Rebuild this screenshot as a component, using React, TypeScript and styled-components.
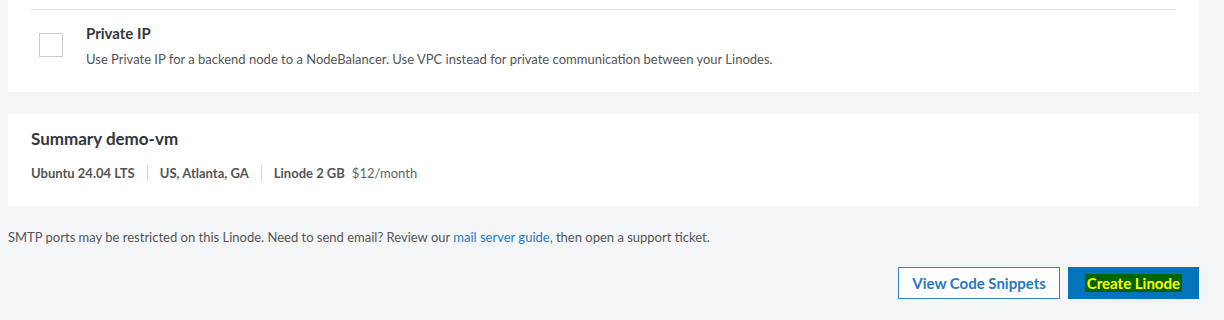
import styled, { createGlobalStyle } from "styled-components";

const GlobalStyle = createGlobalStyle`
  html, body {
    margin: 0;
    padding: 0;
    background: #f4f5f6;
  }
  body {
    font-family: Lato, "Noto Sans", sans-serif;
    color: #32363c;
  }
`;

const Page = styled.div`
  width: 1224px;
  height: 320px;
  overflow: hidden;
  padding: 0 25px 0 8px;
  box-sizing: border-box;
`;

const Card = styled.section<{ $pad: string }>`
  background: #fff;
  padding: ${(p) => p.$pad};
`;

const Divider = styled.hr`
  border: none;
  border-top: 1px solid #e3e5e8;
  margin: 0 0 13px;
`;

const CheckRow = styled.div`
  display: flex;
  align-items: flex-start;
  gap: 23px;
  padding-left: 8px;
`;

const Checkbox = styled.span`
  width: 22px;
  height: 22px;
  border: 1px solid #ccc;
  background: #fff;
  margin-top: 10px;
  flex-shrink: 0;
`;

const OptionTitle = styled.div`
  font-size: 15px;
  font-weight: 700;
  line-height: 20px;
  color: #32363c;
`;

const OptionText = styled.p`
  margin: 8px 0 0;
  font-size: 13px;
  line-height: 16px;
  color: #555;
`;

const Spacer = styled.div<{ $h: number }>`
  height: ${(p) => p.$h}px;
`;

const SummaryTitle = styled.h2`
  margin: 0;
  font-size: 17px;
  font-weight: 700;
  line-height: 22px;
  color: #32363c;
`;

const SummaryRow = styled.div`
  display: flex;
  align-items: center;
  margin-top: 15px;
  font-size: 13px;
  line-height: 16px;
`;

const SummaryItem = styled.span<{ $last?: boolean }>`
  display: flex;
  align-items: center;
  gap: 7px;
  padding-right: ${(p) => (p.$last ? 0 : 12)}px;
  margin-right: ${(p) => (p.$last ? 0 : 12)}px;
  border-right: ${(p) => (p.$last ? "none" : "1px solid #d6d7d9")};
`;

const Strong = styled.span`
  font-weight: 700;
  color: #555;
`;

const Muted = styled.span`
  color: #606469;
`;

const Notice = styled.p`
  margin: 0;
  font-size: 13px;
  line-height: 16px;
  color: #555;
`;

const TextLink = styled.a`
  color: #1f79c8;
  text-decoration: none;
`;

const Actions = styled.div`
  display: flex;
  justify-content: flex-end;
  gap: 8px;
`;

const Button = styled.button<{ $primary?: boolean }>`
  height: 32px;
  padding: 0 ${(p) => (p.$primary ? 16 : 13)}px;
  font-family: Lato, "Noto Sans", sans-serif;
  font-size: 15px;
  font-weight: 700;
  border: 1px solid ${(p) => (p.$primary ? "#0174bc" : "#3683dc")};
  background: ${(p) => (p.$primary ? "#0174bc" : "#fff")};
  color: ${(p) => (p.$primary ? "#fff" : "#1f79c8")};
  cursor: pointer;
`;

const Highlight = styled.mark`
  background: #006400;
  color: #ffff00;
  padding: 0 2px;
`;

export default function App() {
  return (
    <Page>
      <GlobalStyle />
      <Card $pad="9px 23px 25px">
        <Divider />
        <CheckRow>
          <Checkbox />
          <div>
            <OptionTitle>Private IP</OptionTitle>
            <OptionText>
              Use Private IP for a backend node to a NodeBalancer. Use VPC instead for private
              communication between your Linodes.
            </OptionText>
          </div>
        </CheckRow>
      </Card>
      <Spacer $h={22} />
      <Card $pad="14px 23px 25px">
        <SummaryTitle>Summary demo-vm</SummaryTitle>
        <SummaryRow>
          <SummaryItem>
            <Strong>Ubuntu 24.04 LTS</Strong>
          </SummaryItem>
          <SummaryItem>
            <Strong>US, Atlanta, GA</Strong>
          </SummaryItem>
          <SummaryItem $last>
            <Strong>Linode 2 GB</Strong>
            <Muted>$12/month</Muted>
          </SummaryItem>
        </SummaryRow>
      </Card>
      <Spacer $h={23} />
      <Notice>
        SMTP ports may be restricted on this Linode. Need to send email? Review our{" "}
        <TextLink href="#">mail server guide</TextLink>, then open a support ticket.
      </Notice>
      <Spacer $h={22} />
      <Actions>
        <Button>View Code Snippets</Button>
        <Button $primary>
          <Highlight>Create Linode</Highlight>
        </Button>
      </Actions>
    </Page>
  );
}
